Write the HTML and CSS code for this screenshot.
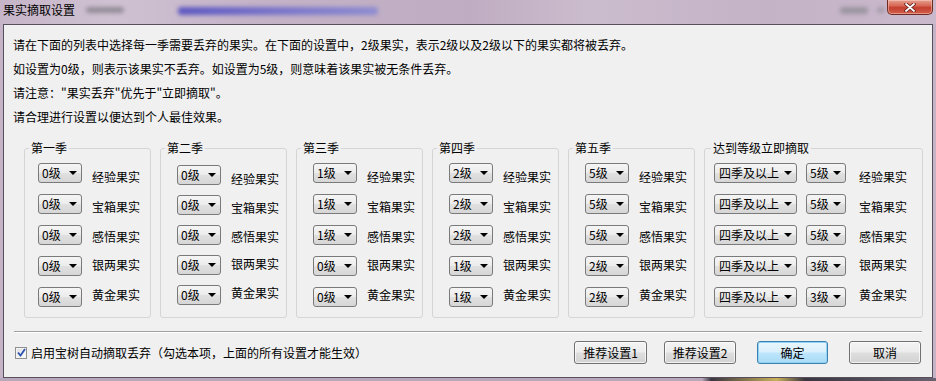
FILE: index.html
```html
<!DOCTYPE html>
<html lang="zh-CN">
<head>
<meta charset="utf-8">
<title>果实摘取设置</title>
<link rel="stylesheet" href="styles.css">
</head>
<body>
<div class="titlebar">
  <span class="title">果实摘取设置</span>
  <span class="blur blur-a"></span>
  <span class="blur blur-b"></span>
  <span class="spacer"></span>
  <span class="blur blur-c"></span>
  <span class="blur blur-d"></span>
  <span class="close"><svg width="12" height="9" viewBox="0 0 12 9"><path d="M2 1 L10 8 M10 1 L2 8" stroke="#5a1a14" stroke-width="3.4" stroke-linecap="round"/><path d="M2 1 L10 8 M10 1 L2 8" stroke="#fff" stroke-width="1.8" stroke-linecap="round"/></svg></span>
</div>
<div class="panel">
  <div class="intro">
    <p>请在下面的列表中选择每一季需要丢弃的果实。在下面的设置中，2级果实，表示2级以及2级以下的果实都将被丢弃。</p>
    <p>如设置为0级，则表示该果实不丢弃。如设置为5级，则意味着该果实被无条件丢弃。</p>
    <p>请注意："果实丢弃"优先于"立即摘取"。</p>
    <p>请合理进行设置以便达到个人最佳效果。</p>
  </div>
  <div class="groups">
    <fieldset class="group group-first">
      <legend>第一季</legend>
      <div class="rows">
        <div class="row r1"><span class="combo"><span class="val">0级</span><i class="arrow"></i></span><span class="label">经验果实</span></div>
        <div class="row r2"><span class="combo"><span class="val">0级</span><i class="arrow"></i></span><span class="label">宝箱果实</span></div>
        <div class="row r3"><span class="combo"><span class="val">0级</span><i class="arrow"></i></span><span class="label">感悟果实</span></div>
        <div class="row r4"><span class="combo"><span class="val">0级</span><i class="arrow"></i></span><span class="label">银两果实</span></div>
        <div class="row r5"><span class="combo"><span class="val">0级</span><i class="arrow"></i></span><span class="label">黄金果实</span></div>
      </div>
    </fieldset>
    <fieldset class="group group-low">
      <legend>第二季</legend>
      <div class="rows">
        <div class="row r1"><span class="combo"><span class="val">0级</span><i class="arrow"></i></span><span class="label">经验果实</span></div>
        <div class="row r2"><span class="combo"><span class="val">0级</span><i class="arrow"></i></span><span class="label">宝箱果实</span></div>
        <div class="row r3"><span class="combo"><span class="val">0级</span><i class="arrow"></i></span><span class="label">感悟果实</span></div>
        <div class="row r4"><span class="combo"><span class="val">0级</span><i class="arrow"></i></span><span class="label">银两果实</span></div>
        <div class="row r5"><span class="combo"><span class="val">0级</span><i class="arrow"></i></span><span class="label">黄金果实</span></div>
      </div>
    </fieldset>
    <fieldset class="group">
      <legend>第三季</legend>
      <div class="rows">
        <div class="row r1"><span class="combo"><span class="val">1级</span><i class="arrow"></i></span><span class="label">经验果实</span></div>
        <div class="row r2"><span class="combo"><span class="val">1级</span><i class="arrow"></i></span><span class="label">宝箱果实</span></div>
        <div class="row r3"><span class="combo"><span class="val">1级</span><i class="arrow"></i></span><span class="label">感悟果实</span></div>
        <div class="row r4"><span class="combo"><span class="val">0级</span><i class="arrow"></i></span><span class="label">银两果实</span></div>
        <div class="row r5"><span class="combo"><span class="val">0级</span><i class="arrow"></i></span><span class="label">黄金果实</span></div>
      </div>
    </fieldset>
    <fieldset class="group">
      <legend>第四季</legend>
      <div class="rows">
        <div class="row r1"><span class="combo"><span class="val">2级</span><i class="arrow"></i></span><span class="label">经验果实</span></div>
        <div class="row r2"><span class="combo"><span class="val">2级</span><i class="arrow"></i></span><span class="label">宝箱果实</span></div>
        <div class="row r3"><span class="combo"><span class="val">2级</span><i class="arrow"></i></span><span class="label">感悟果实</span></div>
        <div class="row r4"><span class="combo"><span class="val">1级</span><i class="arrow"></i></span><span class="label">银两果实</span></div>
        <div class="row r5"><span class="combo"><span class="val">1级</span><i class="arrow"></i></span><span class="label">黄金果实</span></div>
      </div>
    </fieldset>
    <fieldset class="group">
      <legend>第五季</legend>
      <div class="rows">
        <div class="row r1"><span class="combo"><span class="val">5级</span><i class="arrow"></i></span><span class="label">经验果实</span></div>
        <div class="row r2"><span class="combo"><span class="val">5级</span><i class="arrow"></i></span><span class="label">宝箱果实</span></div>
        <div class="row r3"><span class="combo"><span class="val">5级</span><i class="arrow"></i></span><span class="label">感悟果实</span></div>
        <div class="row r4"><span class="combo"><span class="val">2级</span><i class="arrow"></i></span><span class="label">银两果实</span></div>
        <div class="row r5"><span class="combo"><span class="val">2级</span><i class="arrow"></i></span><span class="label">黄金果实</span></div>
      </div>
    </fieldset>
    <fieldset class="group group-wide">
      <legend>达到等级立即摘取</legend>
      <div class="rows">
        <div class="row r1"><span class="combo combo-season"><span class="val">四季及以上</span><i class="arrow"></i></span><span class="combo combo-level"><span class="val">5级</span><i class="arrow"></i></span><span class="label">经验果实</span></div>
        <div class="row r2"><span class="combo combo-season"><span class="val">四季及以上</span><i class="arrow"></i></span><span class="combo combo-level"><span class="val">5级</span><i class="arrow"></i></span><span class="label">宝箱果实</span></div>
        <div class="row r3"><span class="combo combo-season"><span class="val">四季及以上</span><i class="arrow"></i></span><span class="combo combo-level"><span class="val">5级</span><i class="arrow"></i></span><span class="label">感悟果实</span></div>
        <div class="row r4"><span class="combo combo-season"><span class="val">四季及以上</span><i class="arrow"></i></span><span class="combo combo-level"><span class="val">3级</span><i class="arrow"></i></span><span class="label">银两果实</span></div>
        <div class="row r5"><span class="combo combo-season"><span class="val">四季及以上</span><i class="arrow"></i></span><span class="combo combo-level"><span class="val">3级</span><i class="arrow"></i></span><span class="label">黄金果实</span></div>
      </div>
    </fieldset>
  </div>
  <div class="sep"></div>
  <div class="footer">
    <span class="check"><svg width="9" height="9" viewBox="0 0 9 9"><path d="M1 4.5 L3.5 7.5 L8 1" fill="none" stroke="#2c52b0" stroke-width="1.8"/></svg></span>
    <span class="check-label">启用宝树自动摘取丢弃（勾选本项，上面的所有设置才能生效）</span>
    <span class="btn btn-r1">推荐设置1</span>
    <span class="btn btn-r2">推荐设置2</span>
    <span class="btn btn-default">确定</span>
    <span class="btn btn-cancel">取消</span>
  </div>
</div>
<div class="frame-bottom"></div>
</body>
</html>
```
FILE: styles.css
```css
* { box-sizing: border-box; }
html, body { margin: 0; padding: 0; }
body {
  width: 936px;
  height: 381px;
  overflow: hidden;
  background: #c5b4c7;
  font-family: "Noto Sans CJK SC", "Microsoft YaHei", sans-serif;
  font-size: 12px;
  color: #000;
}

/* title bar */
.titlebar {
  height: 24px;
  display: flex;
  align-items: flex-start;
  background: linear-gradient(90deg, #c6b5c8 0%, #cfc1d2 12%, #c4b2c7 28%, #bfacc2 50%, #cbbccd 63%, #c4b2c7 82%, #cab9cc 100%);
}
.title { margin-left: 3px; line-height: 20px; white-space: nowrap; }
.blur { display: block; filter: blur(2px); border-radius: 3px; }
.blur-a { margin: 7px 0 0 11px; width: 38px; height: 6px; background: #938c97; }
.blur-b { margin: 7px 0 0 54px; width: 200px; height: 8px; background: linear-gradient(90deg, #5d58c0, #7d7acb 60%, #8e8cd0); }
.spacer { flex: 1; }
.blur-c { margin-top: 7px; width: 28px; height: 7px; background: #9b95a0; }
.blur-d { margin: 7px 0 0 9px; width: 8px; height: 6px; background: #a39ca8; }
.close {
  margin: 0 3px 0 2px;
  width: 46px;
  height: 15px;
  display: flex;
  align-items: center;
  justify-content: center;
  border: 1px solid #6b2a22;
  border-top: none;
  border-radius: 0 0 5px 5px;
  background: linear-gradient(#e6a090 0%, #d86a57 40%, #c43f2f 55%, #d2604a 100%);
  box-shadow: inset 0 0 0 1px rgba(255, 220, 210, 0.45);
}

/* panel */
.panel {
  margin: 0 3px;
  height: 354px;
  border: 1px solid #57505c;
  background: #f0f0f0;
  display: flex;
  flex-direction: column;
}
.intro { padding: 8px 0 0 9px; }
.intro p { margin: 0; line-height: 24px; white-space: nowrap; }

.groups { display: flex; gap: 9px; margin: 12px 0 0 20px; }
.group {
  margin: 0;
  padding: 0 0 10px 0;
  min-width: 0;
  width: 127px;
  border: 1px solid #d5d5d5;
  border-radius: 3px;
}
.group-wide { width: 219px; }
.group legend { margin-left: 4px; padding: 0 2px; line-height: 14px; white-space: nowrap; }
.group-wide legend { margin-left: 6px; }

.rows { display: flex; flex-direction: column; gap: 11px; margin-top: 8px; padding-left: 16px; }
.group-first .rows { padding-left: 13px; }
.group-wide .rows { padding-left: 9px; }
.group-low .rows { margin-top: 10px; gap: 10px; }

.row { display: flex; align-items: flex-start; height: 20px; }
.label { margin-left: 10px; line-height: 20px; white-space: nowrap; }
.r1 .label { margin-top: 4px; }
.r2 .label { margin-top: 3px; }
.r3 .label { margin-top: 2px; }
.r4 .label { margin-top: -1px; }
.r5 .label { margin-top: -2px; }

.combo {
  display: flex;
  align-items: center;
  width: 44px;
  height: 20px;
  padding-left: 3px;
  border: 1px solid #7a7a7a;
  border-radius: 3px;
  background: linear-gradient(#f5f5f5 0%, #ececec 48%, #e0e0e0 52%, #d6d6d6 100%);
  line-height: 18px;
  white-space: nowrap;
}
.combo .val { flex: 1; }
.combo .arrow {
  width: 0;
  height: 0;
  margin-right: 4px;
  border-left: 4px solid transparent;
  border-right: 4px solid transparent;
  border-top: 4px solid #000;
}
.combo-season { width: 83px; padding-left: 4px; }
.combo-level { width: 40px; margin-left: 9px; }
.group-wide .label { margin-left: 13px; }

/* bottom */
.sep {
  margin: 13px 10px 0;
  border-top: 1px solid #a0a0a0;
  border-bottom: 1px solid #ffffff;
}
.footer {
  display: flex;
  align-items: center;
  height: 23px;
  margin: 8px 11px 0 11px;
}
.check {
  width: 12px;
  height: 12px;
  display: flex;
  align-items: center;
  justify-content: center;
  border: 1px solid #8e8f8f;
  background: linear-gradient(135deg, #dcdcdc, #ffffff);
  box-shadow: inset 0 0 0 1px #f4f4f4;
}
.check-label { margin-left: 4px; white-space: nowrap; }
.btn {
  display: flex;
  align-items: center;
  justify-content: center;
  height: 23px;
  border: 1px solid #707070;
  border-radius: 3px;
  background: linear-gradient(#f4f4f4 0%, #ececec 48%, #dedede 52%, #d2d2d2 100%);
  box-shadow: inset 0 0 0 1px rgba(255, 255, 255, 0.7);
  white-space: nowrap;
}
.btn-r1 { margin-left: auto; width: 73px; }
.btn-r2 { margin-left: 17px; width: 72px; }
.btn-default {
  margin-left: 21px;
  width: 71px;
  border-color: #3c7fb1;
  background: linear-gradient(#eaf6fd 0%, #d9f0fc 48%, #bee6fd 52%, #a9daf5 100%);
  box-shadow: inset 0 0 0 1px #8fd4f5;
}
.btn-cancel { margin-left: 21px; width: 72px; }

.frame-bottom {
  height: 3px;
  background: linear-gradient(90deg, #b8a8bb 0%, #b8a8bb 75%, #3a3540 76%, #c9b25a 83%, #3a3540 86%, #6a6270 100%);
}
```
